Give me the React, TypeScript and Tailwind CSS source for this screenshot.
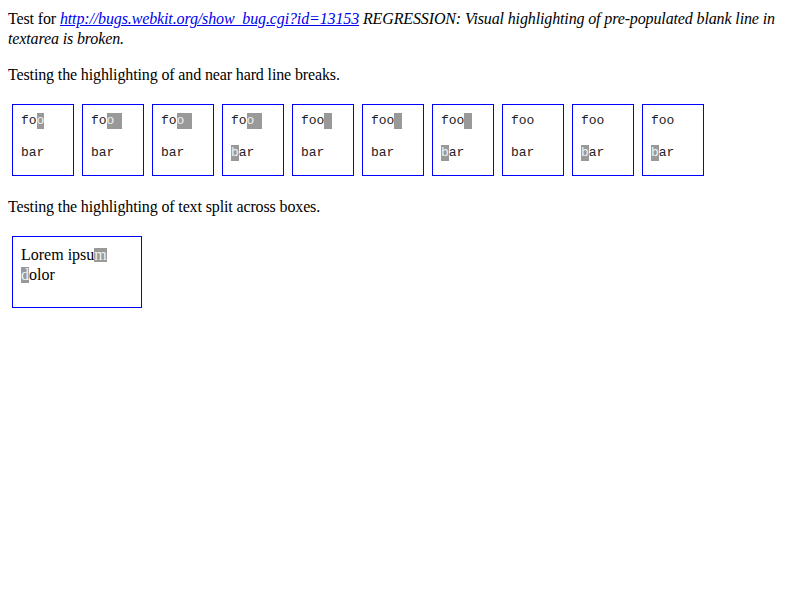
import React from 'react';

type Box = { hiFoo: '' | 'o' | 'o ' | ' '; hiB: boolean };

// each box shows "foo", a blank line, then "bar", with some part selected
const boxes: Box[] = [
  { hiFoo: 'o', hiB: false },
  { hiFoo: 'o ', hiB: false },
  { hiFoo: 'o ', hiB: false },
  { hiFoo: 'o ', hiB: true },
  { hiFoo: ' ', hiB: false },
  { hiFoo: ' ', hiB: false },
  { hiFoo: ' ', hiB: true },
  { hiFoo: '', hiB: false },
  { hiFoo: '', hiB: true },
  { hiFoo: '', hiB: true },
];

const Hi: React.FC<{ children: React.ReactNode; className?: string }> = ({ children, className = '' }) => (
  <span className={`inline-block bg-[#999999] text-[#f2f2f2] ${className}`}>{children}</span>
);

const TextBox: React.FC<{ box: Box }> = ({ box }) => {
  const head = box.hiFoo === 'o' || box.hiFoo === 'o ' ? 'fo' : 'foo';
  return (
    <div className="w-[62px] h-[72px] border border-[#0000ff] pt-[8px] pl-[8px] font-['Liberation_Mono',monospace] text-[13px] leading-[16px] whitespace-pre text-[#222]">
      <div className="h-[16px]">
        {head}
        {box.hiFoo && <Hi className="leading-[16px] h-[16px]">{box.hiFoo}</Hi>}
      </div>
      <div className="h-[16px]"></div>
      <div className="h-[16px]">
        {box.hiB ? (
          <>
            <Hi className="leading-[16px] h-[16px]">b</Hi>ar
          </>
        ) : (
          'bar'
        )}
      </div>
    </div>
  );
};

export default function App() {
  return (
    <div className="px-[8px] pt-[9px] pb-[8px] font-['Liberation_Serif',serif] text-[16px] text-black bg-white min-h-[600px]">
      <p className="leading-[20px] tracking-[-0.13px]">
        Test for{' '}
        <i>
          <a href="#" className="text-[#0000ee] underline">
            http://bugs.webkit.org/show_bug.cgi?id=13153
          </a>{' '}
          REGRESSION: Visual highlighting of pre-populated blank line in textarea is broken.
        </i>
      </p>

      <p className="mt-[16px] leading-[20px] tracking-[-0.13px]">
        Testing the highlighting of and near hard line breaks.
      </p>

      <div className="flex gap-[8px] px-[4px] mt-[19px]">
        {boxes.map((b, i) => (
          <TextBox key={i} box={b} />
        ))}
      </div>

      <p className="mt-[21px] leading-[20px] tracking-[-0.13px]">
        Testing the highlighting of text split across boxes.
      </p>

      <div className="ml-[4px] mt-[19px] w-[130px] h-[72px] border border-[#0000ff] pt-[8px] pl-[8px] leading-[20px]">
        <div>
          Lorem ipsu<Hi className="leading-[14px] h-[14px]">m </Hi>
        </div>
        <div>
          <Hi className="leading-[16px] h-[16px]">d</Hi>olor
        </div>
      </div>
    </div>
  );
}
